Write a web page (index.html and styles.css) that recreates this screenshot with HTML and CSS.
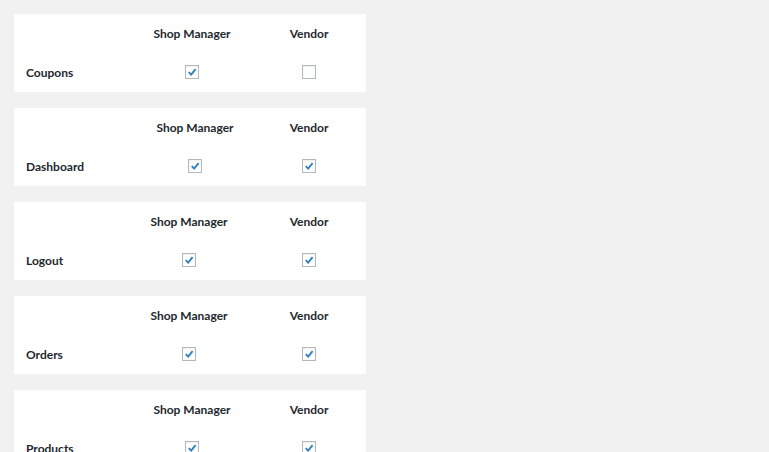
FILE: index.html
```html
<!DOCTYPE html>
<html>
<head>
<meta charset="utf-8">
<link rel="stylesheet" href="styles.css">
</head>
<body>
<div class="list">
  <table class="card">
    <colgroup><col><col class="c-sm"><col class="c-v"></colgroup>
    <tr><th></th><th>Shop Manager</th><th>Vendor</th></tr>
    <tr><td class="label">Coupons</td><td><span class="cb on"><svg viewBox="0 0 14 14"><path d="M3.2 7.2 L6 10 L11.2 3.6"/></svg></span></td><td><span class="cb"></span></td></tr>
  </table>
  <table class="card">
    <colgroup><col><col class="c-sm narrow"><col class="c-v"></colgroup>
    <tr><th></th><th>Shop Manager</th><th>Vendor</th></tr>
    <tr><td class="label">Dashboard</td><td><span class="cb on"><svg viewBox="0 0 14 14"><path d="M3.2 7.2 L6 10 L11.2 3.6"/></svg></span></td><td><span class="cb on"><svg viewBox="0 0 14 14"><path d="M3.2 7.2 L6 10 L11.2 3.6"/></svg></span></td></tr>
  </table>
  <table class="card">
    <colgroup><col><col class="c-sm wide"><col class="c-v"></colgroup>
    <tr><th></th><th>Shop Manager</th><th>Vendor</th></tr>
    <tr><td class="label">Logout</td><td><span class="cb on"><svg viewBox="0 0 14 14"><path d="M3.2 7.2 L6 10 L11.2 3.6"/></svg></span></td><td><span class="cb on"><svg viewBox="0 0 14 14"><path d="M3.2 7.2 L6 10 L11.2 3.6"/></svg></span></td></tr>
  </table>
  <table class="card">
    <colgroup><col><col class="c-sm wide"><col class="c-v"></colgroup>
    <tr><th></th><th>Shop Manager</th><th>Vendor</th></tr>
    <tr><td class="label">Orders</td><td><span class="cb on"><svg viewBox="0 0 14 14"><path d="M3.2 7.2 L6 10 L11.2 3.6"/></svg></span></td><td><span class="cb on"><svg viewBox="0 0 14 14"><path d="M3.2 7.2 L6 10 L11.2 3.6"/></svg></span></td></tr>
  </table>
  <table class="card">
    <colgroup><col><col class="c-sm"><col class="c-v"></colgroup>
    <tr><th></th><th>Shop Manager</th><th>Vendor</th></tr>
    <tr><td class="label">Products</td><td><span class="cb on"><svg viewBox="0 0 14 14"><path d="M3.2 7.2 L6 10 L11.2 3.6"/></svg></span></td><td><span class="cb on"><svg viewBox="0 0 14 14"><path d="M3.2 7.2 L6 10 L11.2 3.6"/></svg></span></td></tr>
  </table>
</div>
</body>
</html>
```

FILE: styles.css
```css
html, body {
  margin: 0;
  padding: 0;
  background: #f1f1f1;
}
body {
  font-family: "Lato", "Open Sans", sans-serif;
  font-size: 12px;
  font-weight: 700;
  color: #23282d;
}
.list {
  padding: 14px;
  display: flex;
  flex-direction: column;
  gap: 16px;
  width: 352px;
}
.card {
  width: 352px;
  background: #fff;
  border-collapse: collapse;
  border-spacing: 0;
}
.c-sm {
  width: 120px;
}
.c-sm.narrow {
  width: 114px;
}
.c-sm.wide {
  width: 126px;
}
.c-v {
  width: 114px;
}
.card th {
  height: 38px;
  padding: 0;
  text-align: center;
  font-weight: 700;
  vertical-align: middle;
  white-space: nowrap;
}
.card td {
  height: 40px;
  padding: 0;
  text-align: center;
  vertical-align: middle;
}
.card td.label {
  text-align: left;
  padding-left: 12px;
}
.cb {
  display: inline-block;
  width: 12px;
  height: 12px;
  border: 1px solid #b4b9be;
  background: #fff;
  box-shadow: inset 0 1px 2px rgba(0,0,0,0.07);
  vertical-align: middle;
  position: relative;
  top: -1px;
}
.cb svg {
  position: absolute;
  left: 0;
  top: 0;
  width: 12px;
  height: 12px;
  fill: none;
  stroke: #2f7fc1;
  stroke-width: 2.2;
}
```
